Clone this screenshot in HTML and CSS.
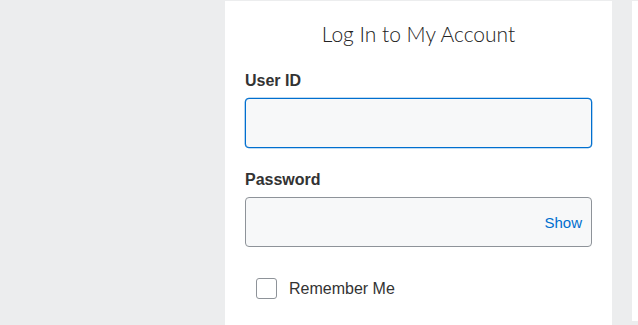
FILE: index.html
```html
<!DOCTYPE html>
<html lang="en">
<head>
<meta charset="utf-8">
<title>Log In</title>
<link rel="stylesheet" href="styles.css">
</head>
<body>
<div class="page">
  <div class="side"></div>
  <main class="card">
    <h1 class="title">Log In to My Account</h1>
    <form class="form">
      <div class="field">
        <label class="label" for="uid">User ID</label>
        <input class="input input-focus" id="uid" type="text">
      </div>
      <div class="field">
        <label class="label" for="pwd">Password</label>
        <div class="input-wrap">
          <input class="input" id="pwd" type="password">
          <span class="show">Show</span>
        </div>
      </div>
      <label class="remember">
        <span class="checkbox"></span>
        <span class="remember-text">Remember Me</span>
      </label>
    </form>
  </main>
  <div class="gutter"></div>
  <div class="right"></div>
</div>
</body>
</html>
```

FILE: styles.css
```css
* { box-sizing: border-box; }
html, body {
  margin: 0;
  padding: 0;
  background: #ecedee;
  height: 100%;
}
body {
  font-family: "Liberation Sans", Arial, sans-serif;
  color: #333;
  overflow: hidden;
}
.page {
  display: flex;
  height: 325px;
  padding-top: 1px;
}
.side {
  width: 225px;
  flex: none;
}
.card {
  width: 387px;
  flex: none;
  background: #fff;
  padding: 19px 20px 0;
}
.gutter {
  width: 20px;
  flex: none;
}
.right {
  flex: 1;
  background: #fff;
  height: 320px;
}
.title {
  margin: 0;
  font-family: Lato, "Open Sans", sans-serif;
  font-weight: 300;
  font-size: 21px;
  line-height: 28px;
  color: #222;
  text-align: center;
}
.form {
  margin-top: 23px;
}
.field {
  margin-bottom: 22px;
}
.label {
  display: block;
  font-weight: 700;
  font-size: 16px;
  line-height: 20px;
  color: #333;
  margin-bottom: 7px;
}
.input {
  display: block;
  width: 100%;
  height: 50px;
  border: 1px solid #8e9399;
  border-radius: 4px;
  background: #f7f8f9;
  font: inherit;
  padding: 0 12px;
  outline: none;
}
.input-focus {
  border-color: #006fcf;
  box-shadow: 0 0 0 0.3px #006fcf;
}
.input-wrap {
  position: relative;
}
.show {
  position: absolute;
  right: 10px;
  top: 0;
  height: 50px;
  display: flex;
  align-items: center;
  font-size: 15px;
  color: #006fcf;
}
.remember {
  display: flex;
  align-items: center;
  gap: 12px;
  padding-left: 11px;
  margin-top: 31px;
}
.checkbox {
  width: 21px;
  height: 21px;
  border: 1px solid #8e9399;
  border-radius: 3px;
  background: #fff;
}
.remember-text {
  font-size: 16px;
  color: #333;
}
```
